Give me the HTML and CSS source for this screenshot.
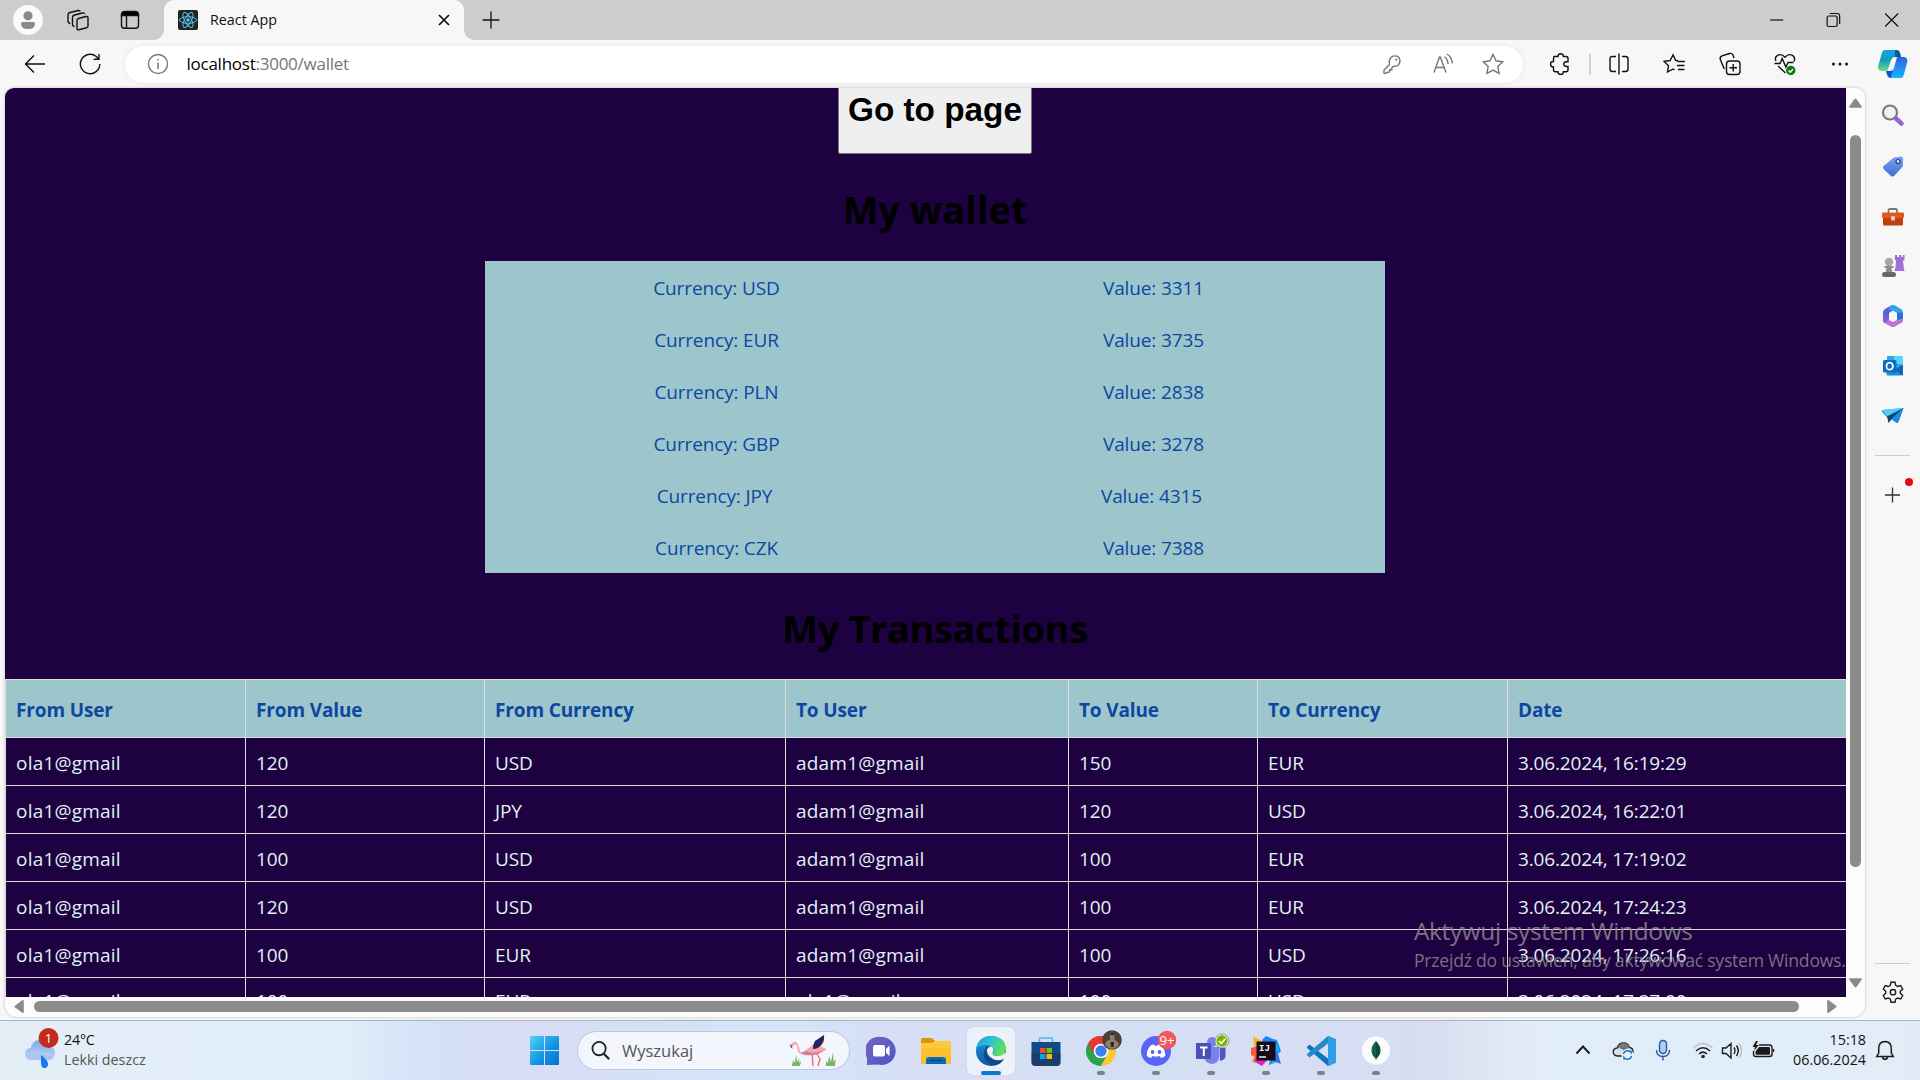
FILE: index.html
```html
<!DOCTYPE html>
<html lang="pl">
<head>
<meta charset="utf-8">
<title>React App</title>
<link rel="stylesheet" href="styles.css">
</head>
<body>
<header class="titlebar">
  <svg class="avatar" viewBox="0 0 30 30"><circle cx="15" cy="15" r="15" fill="#fafafa"/><circle cx="15" cy="10.8" r="4.6" fill="#8a8a8a"/><path d="M8 18.5q0-1.5 1.5-1.5h11q1.500 0 1.500 1.500q0 5.500-7 5.500t-7-5.500z" fill="#8a8a8a"/></svg>
  <svg class="ico workspaces" viewBox="0 0 24 24"><path d="M11 12.500q0-1.500 1.500-2l7.500-2q2-.5 2 1.500v8q0 1.300-1.500 1.800l-7.500 2q-2 .5-2-1.500zM8.500 18.500q-2-.3-2-2.500V9.500q0-2 2-2.500l8-2q1.700-.4 2.300 1M4.300 15.500q-2.300-.5-2.300-2.500V7q0-2 2-2.500l8-2q1.800-.3 2.300 1"/></svg>
  <svg class="ico tabmenu" viewBox="0 0 24 24"><rect x="3.500" y="3.800" width="17" height="16.500" rx="3"/><path d="M8.500 8v12"/><path d="M3.500 7.500q0-4 4-4h9q4 0 4 4z" fill="#000"/></svg>
  <div class="tab">
    <svg class="favicon" viewBox="0 0 20 20"><rect width="20" height="20" rx="2" fill="#20232a"/><g fill="none" stroke="#5ccfee" stroke-width=".9"><ellipse cx="10" cy="10" rx="8.500" ry="3.300"/><ellipse cx="10" cy="10" rx="8.500" ry="3.300" transform="rotate(60 10 10)"/><ellipse cx="10" cy="10" rx="8.500" ry="3.300" transform="rotate(120 10 10)"/></g><circle cx="10" cy="10" r="1.700" fill="#5ccfee"/></svg>
    <span class="tab-title">React App</span>
    <svg class="ico tab-close" viewBox="0 0 24 24"><path d="M7 7l10 10M17 7L7 17" stroke-width="1.700"/></svg>
  </div>
  <svg class="ico newtab" viewBox="0 0 24 24"><path d="M12 3.500v17M3.500 12h17" stroke-width="1.300"/></svg>
  <div class="winctl">
    <svg viewBox="0 0 24 24"><path d="M5.500 12h13"/></svg>
    <svg viewBox="0 0 24 24"><rect x="5.500" y="8" width="10" height="10.500" rx="1.500"/><path d="M8 5.500h7.500q2.500 0 2.500 2.500v8"/></svg>
    <svg viewBox="0 0 24 24"><path d="M5.500 5.500l13 13M18.500 5.500l-13 13"/></svg>
  </div>
</header>

<nav class="toolbar">
  <svg class="ico back" viewBox="0 0 24 24"><path d="M22 12H3M11 3.500L2.500 12l8.500 8.500"/></svg>
  <svg class="ico reload" viewBox="0 0 24 24"><path d="M21.800 12a9.700 9.700 0 1 1-3.500-7.500l2.500 2.500M21 2v5.300h-5.300"/></svg>
  <div class="urlbar">
    <svg class="ico gray" viewBox="0 0 24 24"><circle cx="12" cy="12" r="9.500"/><path d="M12 10.500v6.500M12 7v1.600" stroke-width="1.500"/></svg>
    <span class="url"><b>localhost</b>:3000/wallet</span>
    <svg class="ico gray key" viewBox="0 0 24 24"><path d="M9.500 12.500q-1.200-6 3.500-8.300 4-1.200 6.300 1.800 1.700 4-1 7-2.300 1.800-5 1.200l-1.500 1.500v2h-2l-.3 2.300-2.300.2-1 1.200H4v-3.300z"/><circle cx="16.200" cy="7.700" r="1.100" fill="#767676" stroke="none"/></svg>
    <svg class="ico gray aloud" viewBox="0 0 24 24"><path d="M3 20.500L8.500 5h.8L15 20.500M5 15.500h8M13.500 4.800q3.300 2.500 3.500 7.200M16 2q5 3.500 5.300 9.500"/></svg>
    <svg class="ico gray" viewBox="0 0 24 24"><path d="M12 2.500l3 6.300 6.700 1-4.900 4.700 1.300 6.900-6.100-3.300-6.100 3.300 1.300-6.900L2.300 9.800l6.700-1z"/></svg>
  </div>
  <svg class="ico puzzle" viewBox="0 0 24 24"><path d="M6 4.500h4q0-2.800 2.700-2.800T15.400 4.500H18q2 0 2 2v3.200h-1.800q-2.400.3-2.400 2.400t2.400 2.400H20v3.200q0 2-2 2h-2.600q0 2.700-2.700 2.700T10 19.700H7.500q-2 0-2-2V15Q2.600 15 2.600 12.200T5.500 9.500V6.500z"/></svg>
  <i class="sep"></i>
  <svg class="ico split" viewBox="0 0 24 24"><path d="M12 1.500v21M9 4.500H5.500q-2.500 0-2.500 2.500v10q0 2.500 2.500 2.500H9M15 4.500h3.500q2.500 0 2.500 2.500v10q0 2.500-2.500 2.500H15"/></svg>
  <svg class="ico favs" viewBox="0 0 24 24"><path d="M15 8.700l-2.400-.4L10 2.800 7.200 8.500l-6 .9 4.300 4.300-1 6.300 5.500-3 1.500.9M14.500 9.500H22M14 13.500h7.500M15 17.500h6.500"/></svg>
  <svg class="ico coll" viewBox="0 0 24 24"><rect x="8.500" y="9" width="13.500" height="13.500" rx="3"/><path d="M15.200 12v7.500M11.500 15.700H19M6.300 17L2.300 7.500q-.8-2.500 1.700-3.700l7.500-2.300q2.500-.5 3.500 1.500l1 3"/></svg>
  <svg class="ico heart" viewBox="0 0 24 24"><path d="M3 9Q1.200 5.500 4.500 3.300q4-2 7.500 2 3.500-4 7.500-2 3.300 2.200 1.500 6.200M5 14l7.500 7M1.500 11.500h5.500l2.200-5 3.700 8.500 2.200-4.500h5.500"/><circle cx="17.800" cy="18.500" r="4.700" fill="#0f7b0f" stroke="none"/><path d="M15.600 18.600l1.600 1.600 2.800-3" stroke="#fff"/></svg>
  <svg class="ico dots" viewBox="0 0 24 24"><g fill="#111" stroke="none"><circle cx="5.500" cy="12" r="1.500"/><circle cx="12" cy="12" r="1.500"/><circle cx="18.500" cy="12" r="1.500"/></g></svg>
  <svg class="copilot" viewBox="0 0 30 30"><defs><linearGradient id="cp1" x1="0" y1="0" x2="0" y2="1"><stop offset="0" stop-color="#10a5e8"/><stop offset=".5" stop-color="#159dba"/><stop offset="1" stop-color="#67e07c"/></linearGradient><linearGradient id="cp2" x1="0" y1="0" x2="0" y2="1"><stop offset="0" stop-color="#2f62de"/><stop offset="1" stop-color="#16b5fb"/></linearGradient></defs><path d="M7 1h11q3 0 4 3l1 4h-5q-3 0-4 3l-3 9q-1 2-4 2H3q-4-1-2.500-6L3.500 5Q4.500 1 7 1z" fill="url(#cp1)"/><path d="M17 1h1.500q2.500 0 3.500 3l1 4h-6z" fill="#0b5a93"/><path d="M23 29H13q-3 0-4-3l-1-4q3 0 4-2l4-10q1-2 3-2h7q4.500 1 3 6l-3 11q-1 4-3 4z" fill="url(#cp2)"/><path d="M8 22q3 0 4-3l2.500 3-2 7q-2-.5-3-3z" fill="#1b47cf"/><path d="M19 8h-3q-2 .5-3 3l-3 9q-.6 2-2 2h4q3 0 4-3z" fill="#f7f7f7"/></svg>
</nav>

<main class="main">
  <section class="view">
    <div class="page">
      <div class="page-inner">
        <button class="go">Go to page</button>
        <h1>My wallet</h1>
        <div class="wallet">
          <p>Currency: USD</p><p>Value: 3311</p>
          <p>Currency: EUR</p><p>Value: 3735</p>
          <p>Currency: PLN</p><p>Value: 2838</p>
          <p>Currency: GBP</p><p>Value: 3278</p>
          <p class="narrow">Currency: JPY</p><p class="narrow">Value: 4315</p>
          <p>Currency: CZK</p><p>Value: 7388</p>
        </div>
        <h1 class="second">My Transactions</h1>
        <table class="tx">
          <colgroup><col class="c1"><col class="c2"><col class="c3"><col class="c4"><col class="c5"><col class="c6"><col class="c7"></colgroup>
          <thead><tr><th>From User</th><th>From Value</th><th>From Currency</th><th>To User</th><th>To Value</th><th>To Currency</th><th>Date</th></tr></thead>
          <tbody>
            <tr><td class="mail">ola1@gmail</td><td>120</td><td>USD</td><td class="mail">adam1@gmail</td><td>150</td><td>EUR</td><td>3.06.2024, 16:19:29</td></tr>
            <tr><td class="mail">ola1@gmail</td><td>120</td><td>JPY</td><td class="mail">adam1@gmail</td><td>120</td><td>USD</td><td>3.06.2024, 16:22:01</td></tr>
            <tr><td class="mail">ola1@gmail</td><td>100</td><td>USD</td><td class="mail">adam1@gmail</td><td>100</td><td>EUR</td><td>3.06.2024, 17:19:02</td></tr>
            <tr><td class="mail">ola1@gmail</td><td>120</td><td>USD</td><td class="mail">adam1@gmail</td><td>100</td><td>EUR</td><td>3.06.2024, 17:24:23</td></tr>
            <tr><td class="mail">ola1@gmail</td><td>100</td><td>EUR</td><td class="mail">adam1@gmail</td><td>100</td><td>USD</td><td>3.06.2024, 17:26:16</td></tr>
            <tr class="last"><td class="mail">ola1@gmail</td><td>100</td><td>EUR</td><td class="mail">ola1@gmail</td><td>100</td><td>USD</td><td>3.06.2024, 17:27:00</td></tr>
          </tbody>
        </table>
      </div>
    </div>
    <div class="vscroll">
      <svg viewBox="0 0 12 10"><path d="M5 1q1-1.300 2 0l4.700 6.500q.6 1.500-.7 1.500H1Q-.3 9 .3 7.500z"/></svg>
      <i></i>
      <svg viewBox="0 0 12 10"><path d="M5 9q1 1.300 2 0l4.700-6.500Q12.300 1 11 1H1Q-.3 1 .3 2.500z"/></svg>
    </div>
    <div class="hscroll">
      <svg viewBox="0 0 10 12"><path d="M1 5q-1.300 1 0 2l6.500 4.700q1.500.6 1.500-.7V1Q9-.3 7.500.3z"/></svg>
      <i></i>
      <svg viewBox="0 0 10 12"><path d="M9 5q1.300 1 0 2l-6.500 4.700Q1 12.300 1 11V1Q1-.3 2.500.3z"/></svg>
    </div>
    <div class="watermark"><strong>Aktywuj system Windows</strong><span>Przejdź do ustawień, aby aktywować system Windows.</span></div>
  </section>

  <aside class="sidebar">
    <svg class="find" viewBox="0 0 24 24"><circle cx="9" cy="9.500" r="7" fill="#eef2f5" stroke="#7b7b7b" stroke-width="2.200"/><path d="M15 15.500l5.500 5" stroke="#9a62cf" stroke-width="4.500" stroke-linecap="round"/></svg>
    <svg viewBox="0 0 24 24"><defs><linearGradient id="tg" x1="0" y1="0" x2="0" y2="1"><stop offset="0" stop-color="#77a2ee"/><stop offset="1" stop-color="#4670d0"/></linearGradient></defs><path d="M13 2.500l7-1q2 0 2 2v7q0 1-1 2l-8 8.500q-1.500 1-3 0L2.500 14q-1-1.500 0-3z" fill="url(#tg)"/><circle cx="17" cy="6.500" r="2" fill="#dce8fb" stroke="#233a85" stroke-width="1.200"/></svg>
    <svg class="tools" viewBox="0 0 24 24"><path d="M7.500 8V5.500q0-1.500 1.500-1.500h5.500Q16 4 16 5.500V8" fill="none" stroke="#777" stroke-width="1.800"/><rect x="2" y="11" width="20" height="9.500" rx="1.500" fill="#bf3f0f"/><path d="M2 7.500h20q1 0 1 1V12q0 1-1 1H2q-1 0-1-1V8.500q0-1 1-1z" fill="#e2591f"/><rect x="10" y="11" width="4" height="4.500" rx="1.500" fill="#d9d9d9"/></svg>
    <svg viewBox="0 0 24 24"><path d="M14 1h2v2h2V1h2.500v2H22V1h1.500v4.500l-1.500 1.500.8 7 .7 3H13.500l.8-3 .8-7-1.300-1.500z" fill="#a06fd8"/><circle cx="8" cy="8" r="4.200" fill="#a6a6a6"/><path d="M3.500 12h9v2h-2l1 5h-7l1-5h-2z" fill="#8d8d8d"/><path d="M1 21q0-3 2.500-3h9q2.500 0 2.500 3 0 2-2 2H3q-2 0-2-2z" fill="#686868"/></svg>
    <svg viewBox="0 0 24 24"><path d="M10.500 1.300L4 5Q2 6.200 2 8.500v7q0 2.500 1.500 3.500L8 16V9l4-2.500V1z" fill="#5b63d3"/><path d="M10.500 1.300q1.500-.8 3 0L20 5q2 1.200 2 3.500V16l-6-3.500V9l-5-3-2.500 1.500V3z" fill="#35a2ea"/><path d="M22 8.500v7q0 2.300-2 3.500l-4-3V9z" fill="#2c6ed6"/><path d="M20 19l-6.500 3.700q-1.500.8-3 0L3.500 19 8 16l4 2 4-2 6-1.500q.3 3.200-2 4.500z" fill="#b873d6"/><path d="M3.500 19q-1.500-1-1.500-3.500V12l6 2v2z" fill="#8a5bd6"/><circle cx="12" cy="12" r="4" fill="#f7f7f7"/></svg>
    <svg viewBox="0 0 24 24"><rect x="6" y="2" width="15.500" height="18" rx="1" fill="#28a8ea"/><path d="M13 2h8.500v8H13z" fill="#50d9ff"/><path d="M6 13l8 3 8-5v9q0 1.500-1.500 1.500H7q-1.500 0-1.500-1.500z" fill="#1490df"/><path d="M22 10.500v11L13 16z" fill="#1366ac"/><rect x="2" y="6" width="13.500" height="12.500" rx="1.500" fill="#0f6cbd"/><ellipse cx="8.700" cy="12.200" rx="3.200" ry="3.500" fill="none" stroke="#fff" stroke-width="1.800"/></svg>
    <svg class="send" viewBox="0 0 24 24"><path d="M1 6l21.500-2L17 18.500q-.8 1-2 .2l-4.500-3.200L22.500 4 6 13.500 1 8q-.7-1.500 0-2z" fill="#28a8ea"/><path d="M1 6l21.500-2L6.500 12z" fill="#58ccf6"/><path d="M22.500 4L6 12.500l1.500 6.500 3.500-4z" fill="#0a4776"/><path d="M22.500 4L11 15l5 3.700q1 .3 1.500-.7z" fill="#1490df"/></svg>
    <hr>
    <div class="addwrap"><svg viewBox="0 0 24 24" class="line"><path d="M11.500 4.500v15M4 12h15" stroke="#333" stroke-width="1.300"/></svg><i class="reddot"></i></div>
    <hr class="low">
    <svg viewBox="0 0 24 24" class="line gear"><path d="M10 2.200h4l.7 3.200 1.900 1.100 3.100-1 2 3.500-2.400 2.200v2.100l2.400 2.200-2 3.500-3.100-1-1.900 1.100-.7 3.200h-4l-.7-3.200-1.900-1.100-3.100 1-2-3.500 2.400-2.200v-2.100L2.300 9l2-3.500 3.100 1 1.900-1.100z"/><circle cx="12" cy="12.200" r="2.700"/></svg>
  </aside>
</main>

<footer class="taskbar">
  <div class="weather">
    <svg viewBox="0 0 34 38"><defs><linearGradient id="cl" x1="0" y1="0" x2="0" y2="1"><stop offset="0" stop-color="#7ea6ea"/><stop offset="1" stop-color="#c6d9f8"/></linearGradient></defs><path d="M7 31q-6-.5-6-6t6-6q1-8 9-8t10 7q5 1 5 6t-5 7z" fill="url(#cl)"/><path d="M7 31q-5.500-.5-5.500-5.500h28Q30 30 26 31z" fill="#aac6f3"/><path d="M17 26q7 5 7 9t-3.500 4Q17 39 17 34z" fill="#1877f2"/><circle cx="24.500" cy="9" r="10" fill="#c42b1c"/><text x="24.500" y="14" text-anchor="middle" class="badge-text">1</text></svg>
    <div class="wtext"><span>24°C</span><span class="dim">Lekki deszcz</span></div>
  </div>
  <svg class="start" viewBox="0 0 29 29"><defs><linearGradient id="wn" x1="0" y1="0" x2="1" y2="1"><stop offset="0" stop-color="#4fd2fb"/><stop offset=".6" stop-color="#1090e0"/><stop offset="1" stop-color="#0573cc"/></linearGradient></defs><path d="M1 0h13v14H0V1q0-1 1-1zM15 0h13q1 0 1 1v13H15zM0 15h14v14H1q-1 0-1-1zM15 15h14v13q0 1-1 1H15z" fill="url(#wn)"/></svg>
  <div class="search">
    <svg class="mag" viewBox="0 0 20 20"><circle cx="8.500" cy="8" r="7" fill="none" stroke="#222" stroke-width="1.900"/><path d="M13.500 13.500l5 5" stroke="#222" stroke-width="2.300" stroke-linecap="round"/></svg>
    <span>Wyszukaj</span>
    <svg class="flamingo" viewBox="0 0 48 32"><path d="M3 31l1-6 2 3 1-8 1.500 7 2-4-.5 5 2-2-1 5zM37 31l0-5 2 2 1-7 2 6 2-10 .5 10 2-3-.5 7z" fill="#79b563"/><path d="M23.500 19v6l.5 6M28 19l3 5-2 7" fill="none" stroke="#ee6f78" stroke-width="1.400"/><path d="M2.500 9Q5 5 8 8q3 4 3 9 4 1 7-3l6-4 10-9 1 6-3 5q5 1 5 3-5 3-9 4-11 3-16 0Q8 18 8.500 13 8 9 5.500 9.500L3 13z" fill="#f4a9b0"/><path d="M17 16q8 4 18-1-6 6-14 5-6 0-9-2z" fill="#cf7ea3"/><path d="M35 0q1 5-2.500 9.500T24 14q0-5 2-8z" fill="#272263"/><path d="M2 9l1.500 5L1 11z" fill="#3b294e"/></svg>
  </div>
  <div class="apps">
    <div class="app"><svg viewBox="0 0 30 30"><defs><linearGradient id="ch" x1="0" y1="0" x2="1" y2="1"><stop offset="0" stop-color="#7a5bb9"/><stop offset=".5" stop-color="#6160c7"/><stop offset="1" stop-color="#4a50cc"/></linearGradient></defs><path d="M15 1a14 14 0 1 1-3 27.500L1 29V22A14 14 0 0 1 15 1z" fill="url(#ch)"/><rect x="7" y="9" width="12" height="11.500" rx="2" fill="#fff"/><path d="M20 13l3.500-3.500v10.500L20 17z" fill="#fff"/></svg></div>
    <div class="app"><svg viewBox="0 0 30 30"><path d="M1.500 2H11l3 3v6H0V3.500Q0 2 1.500 2z" fill="#d9970b"/><path d="M0 7h11l3-2h15q1 0 1 1v22H1q-1 0-1-1z" fill="#fdca3b"/><path d="M0 12h30v16H1q-1 0-1-1z" fill="#fcc02d"/><path d="M5 28v-4q0-3 3-3h14q3 0 3 3v4z" fill="#0c6bb8"/><path d="M8.500 24.500h13" stroke="#063e75" stroke-width="1.300"/></svg></div>
    <div class="app active"><svg viewBox="0 0 30 30"><defs><linearGradient id="e1" x1="0" y1="0" x2="1" y2=".4"><stop offset="0" stop-color="#1e9bde"/><stop offset=".5" stop-color="#2bc3d2"/><stop offset="1" stop-color="#5fdf5c"/></linearGradient><linearGradient id="e2" x1="0" y1="0" x2="0" y2="1"><stop offset="0" stop-color="#1d9be1"/><stop offset="1" stop-color="#0b55a8"/></linearGradient></defs><circle cx="15" cy="15" r="15" fill="url(#e2)"/><path d="M.2 12.500Q2 .5 15 0q14 .5 15 12 0 8-8 8-6 0-5.500-2.500 2-1.500 1-4.500-2-4.500-8-4Q3 9.500.2 12.500z" fill="url(#e1)"/><path d="M10.500 16q0-5 5.500-5.500 2.300 3 .5 6.500-.5 3 5.500 3 4 0 7-3 3 0 1.500 3-.5 2-2.500 3-7 4-12.500 1T10.500 16z" fill="#edf1fa"/><path d="M10.500 10.500Q6 17 9 22.500t10 7Q25 28 28 23q-6 2.500-11 0T10.800 15q-.2-2.500 1.500-4.500z" fill="#114a8b"/></svg><i></i></div>
    <div class="app"><svg viewBox="0 0 30 30"><path d="M8.500 7V3q0-1 1-1h11q1 0 1 1v4" fill="none" stroke="#3cc0f0" stroke-width="1.700"/><path d="M.5 6h29v20q0 4-4 4h-21q-4 0-4-4z" fill="#104a86"/><path d="M.5 17h29v9q0 4-4 4h-21q-4 0-4-4z" fill="#233659" opacity=".6"/><path d="M9 12h5.500v5H9z" fill="#f25022"/><path d="M15.500 12H21v5h-5.500z" fill="#7fba00"/><path d="M9 18h5.500v5H9z" fill="#00a4ef"/><path d="M15.500 18H21v5h-5.500z" fill="#ffb900"/></svg></div>
    <div class="app run"><svg viewBox="0 0 30 30"><path d="M15 15L2 7.500A15 15 0 0 1 28 7.500z" fill="#e33b2e"/><path d="M2 7.500A15 15 0 0 0 15 30l6.500-11.500L15 15z" fill="#2ba24c"/><path d="M28 7.500A15 15 0 0 1 15 30l6.500-11.500V7.500z" fill="#fcc934"/><path d="M15 0a15 15 0 0 0-13 7.500L8.500 19 15 7.500h13A15 15 0 0 0 15 0z" fill="#e33b2e"/><circle cx="15" cy="15" r="7.300" fill="#fff"/><circle cx="15" cy="15" r="5.700" fill="#3b82ee"/></svg><svg class="over" viewBox="0 0 20 20"><circle cx="10" cy="10" r="9.800" fill="#4c4037"/><path d="M3 15q1-5 5-5V6q0-3 2-3t2.500 3v4q4 1 4.500 5-4 4-7 4t-7-4z" fill="#8f7d6d"/><path d="M8.500 4q1.500-2 3.500 0v1H8.500zM8.500 12h3.500l-.5 5H9z" fill="#2b241f"/></svg><i></i></div>
    <div class="app run"><svg viewBox="0 0 30 30"><circle cx="15" cy="15" r="15" fill="#5865f2"/><path d="M9.500 9.500q2-1 3.500-1l.7 1.200h2.600L17 8.500q1.500 0 3.500 1 4 5 3.800 10.500-2 1.500-4.300 2l-1.200-2q-3.800 1-7.600 0L10 22q-2.300-.5-4.300-2Q5.500 14.500 9.500 9.500z" fill="#fff"/><circle cx="11.500" cy="16" r="1.900" fill="#5865f2"/><circle cx="18.500" cy="16" r="1.900" fill="#5865f2"/></svg><svg class="over" viewBox="0 0 20 20"><circle cx="10" cy="10" r="9.300" fill="#ee5a5c"/><text x="10" y="15" text-anchor="middle" class="badge-text">9+</text></svg><i></i></div>
    <div class="app run"><svg class="wide" viewBox="0 0 30 30"><circle cx="16" cy="6" r="5" fill="#7b83eb"/><path d="M24 12h5.500v8q0 4-5.500 5z" fill="#4f58c1"/><path d="M9 11h14.500v9q-.5 7-7.500 8-5-.5-7-4z" fill="#7b83eb"/><rect x="0" y="7" width="15" height="16" rx="1" fill="#4b50b5"/><path d="M4 11.500h7.500M7.800 11.500v8.500" stroke="#fff" stroke-width="2"/></svg><svg class="over" viewBox="0 0 20 20"><circle cx="10" cy="11" r="7" fill="#fff" stroke="#777" stroke-width=".8"/><circle cx="10" cy="11" r="5.700" fill="#78b500"/><path d="M7 11l2.300 2.300 4-4.600" fill="none" stroke="#fff" stroke-width="1.700"/></svg><i></i></div>
    <div class="app run"><svg viewBox="0 0 30 30"><path d="M2 0l9 5-3 22-8-2 4-6-3-5 2-4z" fill="#fdb528"/><path d="M0 12l8-2v14l-6 3 2-6-4-2z" fill="#fc5a3e"/><path d="M11 4l4-4 7 3 4 1 4 11-4 4-12-7z" fill="#2086f4"/><path d="M22 3l6 10-2 13-8 3z" fill="#16b3f0"/><path d="M4 21h15l-8 9-7-4z" fill="#e61ec0"/><path d="M26 14l4 14-8-3-5 5z" fill="#2d75e8"/><rect x="5.500" y="5.500" width="19" height="19" fill="#170a18"/><text x="8" y="14.500" class="ij">IJ</text><path d="M8 21h7" stroke="#fff" stroke-width="1.400"/></svg><i></i></div>
    <div class="app run"><svg viewBox="0 0 30 30"><path d="M22 0l8 3.500v23L22 30 .5 11.500 3.500 8.500 22 22.500z" fill="#0f76be"/><path d="M22 0L.5 18.500l3 3L22 7.500z" fill="#2589ca"/><path d="M22 0l8 3.500v23L22 30z" fill="#2f9de4"/></svg><i></i></div>
    <div class="app run"><svg viewBox="0 0 30 30"><circle cx="15" cy="14.500" r="14" fill="#fbfbfb"/><path d="M15 5q-4.500 4.500-4.500 9.500 0 4.500 4 8l.5 2z" fill="#116149"/><path d="M15 5q4.500 4.500 4.500 9.500 0 4.500-4 8l-.5 2z" fill="#0b4b38"/></svg><i></i></div>
  </div>
  <div class="tray">
    <svg viewBox="0 0 24 24" class="line chev"><path d="M5.500 14.500l6.500-7 6.500 7" stroke-width="1.900"/></svg>
    <svg viewBox="0 0 24 24" class="cloud"><path d="M6.500 17q-4.200-.5-4.300-4 0-3.500 4-4 1.500-5 6.300-5 4.500 0 6 4.500 3.500.5 3.500 4T18 17z" fill="#ddd" stroke="#222" stroke-width="1.300"/><path d="M6.500 9q4-.5 6 2.500l6-3Q17 4 12.500 4 8 4 6.500 9z" fill="#777"/><circle cx="16.500" cy="16" r="6" fill="#eaf4fc"/><path d="M12.300 15a4.400 4.400 0 0 1 7.800-1.500v-2M20.700 17a4.400 4.400 0 0 1-7.800 1.500v2" fill="none" stroke="#1473c9" stroke-width="1.400"/></svg>
    <svg viewBox="0 0 24 24" class="mic"><g fill="none" stroke="#2458a6" stroke-width="1.400"><rect x="8.500" y="1.500" width="7" height="13" rx="3.500" fill="#b5cdeb"/><path d="M5.500 11q0 6.500 6.500 6.500t6.500-6.500M12 17.500v4"/></g></svg>
    <svg viewBox="0 0 24 24" class="wifi"><g fill="none" stroke="#222" stroke-width="1.500"><path d="M2.500 9q9.500-9 19 0" stroke="#b9c0c8"/><path d="M5 12q7-6.500 14 0M8 15q4-3.800 8 0"/></g><circle cx="12" cy="17.500" r="1.800" fill="#222"/></svg>
    <svg viewBox="0 0 24 24" class="line vol"><path d="M2.500 9H6l5-4.500V19L6 14.500H2.500zM14 8.500q2 3 0 6.500M16.500 6.500q3.500 5 0 10.500" /><path d="M19 4.500q5 7 0 14.500" stroke="#b9c0c8"/></svg>
    <svg viewBox="0 0 24 24" class="batt"><path d="M8 6h10.500q2.500 0 2.500 2.500V15q0 2.500-2.500 2.500H5Q2.500 17.500 2.500 15v-3" fill="none" stroke="#1a1a1a" stroke-width="1.400"/><path d="M8 8h10q1 0 1 1v6q0 .8-1 .8H5.500q-1 0-1-.8v-2.500zM21.800 9.500q1.700.5 1.700 2t-1.700 2zM5 2L1.500 8H4l-1 4 4.800-6H5L7 2z" fill="#1a1a1a"/></svg>
    <div class="clock"><span>15:18</span><span>06.06.2024</span></div>
    <svg viewBox="0 0 24 24" class="line bell"><path d="M12 2.500q6.300.3 6.300 7V14l2 3.500H3.700l2-3.500V9.500q0-6.700 6.300-7zM9.500 18q.5 2.300 2.500 2.300t2.500-2.300" stroke-width="1.500"/></svg>
  </div>
</footer>
</body>
</html>
```
FILE: styles.css
```css
* { box-sizing: border-box; }
body {
  margin: 0;
  width: 1920px;
  height: 1080px;
  overflow: hidden;
  display: flex;
  flex-direction: column;
  background: #f7f7f7;
  font-family: "Open Sans", "Noto Sans", sans-serif;
}
svg { display: block; flex: none; }
.ico { width: 24px; height: 24px; fill: none; stroke: #111; stroke-width: 1.4; }
.gray { stroke: #767676; }
.line { fill: none; stroke: #1a1a1a; stroke-width: 1.4; }

/* Title bar */
.titlebar { height: 40px; flex: none; display: flex; align-items: center; padding-left: 13px; background: #cdcdcd; }
.avatar { width: 30px; height: 30px; }
.workspaces { margin-left: 22.500px; }
.tabmenu { margin-left: 28.500px; }
.tab {
  position: relative;
  margin-left: 22px;
  width: 300px;
  height: 40px;
  display: flex;
  align-items: center;
  padding: 0 8px 0 14px;
  background: #f7f7f7;
  border-radius: 10px 10px 0 0;
}
.tab::before, .tab::after { content: ""; position: absolute; bottom: 0; width: 10px; height: 10px; }
.tab::before { left: -10px; background: radial-gradient(circle at 0 0, #cdcdcd 9.5px, #f7f7f7 10px); }
.tab::after { right: -10px; background: radial-gradient(circle at 100% 0, #cdcdcd 9.5px, #f7f7f7 10px); }
.favicon { width: 20px; height: 20px; }
.tab-title { margin-left: 12px; flex: 1; font-size: 14.3px; line-height: 20px; color: #111; }
.newtab { margin-left: 15px; }
.winctl { margin-left: auto; display: flex; }
.winctl svg { width: 57.3px; height: 24px; fill: none; stroke: #111; stroke-width: 1.2; }

/* Address bar */
.toolbar { height: 48px; flex: none; display: flex; align-items: center; padding-left: 23px; }
.reload { margin-left: 31px; }
.urlbar {
  margin-left: 23px;
  width: 1398px;
  height: 37px;
  display: flex;
  align-items: center;
  padding: 0 18px 0 20.500px;
  border-radius: 19px;
  background: #fff;
  box-shadow: 0 0 4px rgba(0, 0, 0, .08);
}
.url { flex: 1; margin-left: 17px; font-size: 17px; line-height: 24px; letter-spacing: -.25px; color: #767676; }
.url b { font-weight: 400; color: #000; }
.aloud { margin: 0 26px 0 27px; }
.puzzle { margin-left: 25px; }
.sep { width: 2px; height: 21px; margin: 0 16px 0 17px; background: #d0d0d0; }
.favs { margin-left: 32px; }
.coll, .heart, .dots { margin-left: 31px; }
.copilot { width: 30px; height: 30px; margin-left: 26px; }

/* Browser viewport */
.main { height: 932px; flex: none; display: flex; padding-left: 5px; }
.view {
  position: relative;
  width: 1860px;
  height: 929px;
  display: grid;
  grid-template-columns: 1841px 19px;
  grid-template-rows: 909px 20px;
  background: #fcfcfc;
  border-radius: 9px 9px 12px 12px;
  overflow: hidden;
  box-shadow: 0 0 3px rgba(0, 0, 0, .25);
}
.page { overflow: hidden; background: #1d0140; }
.page-inner { width: 1860px; display: flex; flex-direction: column; align-items: center; }
.go {
  margin: -22px 0 0;
  width: 194px;
  height: 88px;
  padding: 0;
  border: 1px solid #767676;
  border-radius: 2px;
  background: #efefef;
  color: #000;
  font: bold 33.3px "Liberation Sans", Arial, sans-serif;
  white-space: nowrap;
}
h1 { margin: 28px 0 25px; font-size: 38px; line-height: 54px; font-weight: 700; color: #000; }
h1.second { margin: 28px 0 24px; letter-spacing: -.4px; }
.wallet {
  width: 900px;
  height: 312px;
  padding: 0 13px;
  display: grid;
  grid-template-columns: 1fr 1fr;
  grid-auto-rows: 52px;
  background: #9cc6cc;
  color: #0d47a1;
}
.wallet p { margin: 0; text-align: center; font-size: 19px; line-height: 54px; letter-spacing: -.12px; }
.wallet .narrow { padding-right: 4px; }
.tx { width: 1860px; table-layout: fixed; border-collapse: collapse; font-size: 19px; letter-spacing: -.14px; color: #e0f2f1; }
.tx th, .tx td { border: 1px solid #ddd; padding: 0 10px; text-align: left; height: 48px; line-height: 28px; }
.tx td { padding-top: 2px; }
.tx .last td { padding-top: 0; padding-bottom: 2px; }
.tx .mail { letter-spacing: .2px; }
.tx th { height: 58px; padding-top: 2px; background: #9cc6cc; color: #0d47a1; }
.c1 { width: 240px; }
.c2 { width: 239px; }
.c3 { width: 301px; }
.c4 { width: 283px; }
.c5 { width: 189px; }
.c6 { width: 250px; }

.vscroll { display: flex; flex-direction: column; align-items: center; padding: 10px 1px 9px 0; }
.vscroll svg { width: 13px; height: 11px; fill: #8a8a8a; }
.vscroll i { width: 11px; height: 732px; margin: 26px 0 auto; border-radius: 6px; background: #8b8b8b; }
.hscroll { display: flex; align-items: center; padding: 0 9px 1px; }
.hscroll svg { width: 11px; height: 13px; fill: #8a8a8a; }
.hscroll i { width: 1765px; height: 11px; margin: 0 auto 0 9px; border-radius: 6px; background: #8b8b8b; }

.watermark { position: absolute; left: 1409px; top: 825px; display: flex; flex-direction: column; color: rgba(145, 141, 146, .82); white-space: nowrap; }
.watermark strong { font-weight: 400; font-size: 24.5px; line-height: 36px; letter-spacing: -.4px; }
.watermark span { font-size: 17.6px; line-height: 23px; letter-spacing: -.24px; }

/* Edge sidebar */
.sidebar { flex: 1; display: flex; flex-direction: column; align-items: center; padding-top: 15px; }
.sidebar > svg { width: 24px; height: 24px; margin-bottom: 26.2px; }
.sidebar > .find { margin-bottom: 27.7px; }
.sidebar > .tools { margin-bottom: 24.9px; }
.sidebar > .send { margin-bottom: 25px; }
.sidebar hr { width: 35px; height: 1px; margin: 2px 0 0; border: 0; background: #ccc; flex: none; }
.sidebar hr.low { margin-top: auto; }
.sidebar > .gear { margin: 16px 0 16px; }
.addwrap { position: relative; margin-top: 27px; width: 24px; height: 24px; }
.reddot { position: absolute; left: 24px; top: -5px; width: 8px; height: 8px; border-radius: 50%; background: #e30b0b; }

/* Windows taskbar */
.taskbar {
  height: 60px;
  flex: none;
  display: flex;
  align-items: center;
  padding-left: 24px;
  border-top: 1px solid #abb3be;
  background: linear-gradient(90deg, #e3eef7 0, #e2eef8 340px, #d4e2fa 420px, #d8ddf5 520px, #d6e0f7 620px, #d3e5fa 770px, #d6dff5 900px, #d5dff3 1150px, #d7def3 1380px, #d8ddef 1430px, #e1ecf8 1520px, #e0eefa 1700px, #e2ecf7 1920px);
}
.badge-text { fill: #fff; font-size: 13px; }
.weather { width: 506px; display: flex; align-items: center; }
.weather svg { width: 34px; height: 38px; overflow: visible; margin-top: -6px; }
.wtext { margin: -2px 0 0 6px; display: flex; flex-direction: column; font-size: 14.3px; line-height: 20px; color: #111; letter-spacing: -.2px; }
.wtext .dim { color: #555; letter-spacing: 0; }
.start { width: 29px; height: 29px; }
.search {
  margin-left: 18px;
  width: 273px;
  height: 39px;
  display: flex;
  align-items: center;
  padding: 0 12px 0 13px;
  border: 1px solid #bac8e2;
  border-radius: 20px;
  background: #f3f6fd;
}
.mag { width: 19px; height: 19px; }
.search span { flex: 1; margin-left: 12px; font-size: 16.500px; line-height: 24px; color: #555; }
.flamingo { width: 48px; height: 32px; }
.apps { margin-left: 7px; display: flex; gap: 7px; }
.app { position: relative; width: 48px; height: 48px; display: flex; justify-content: center; padding-top: 9px; border-radius: 6px; }
.app svg { width: 30px; height: 30px; }
.app.active { background: #edf1fa; box-shadow: 0 0 1px #aab; }
.app svg.wide { width: 32px; }
.app .over { position: absolute; width: 20px; height: 20px; left: 25px; top: 3px; }
.app i { position: absolute; bottom: 0; left: 20px; width: 8px; height: 4px; border-radius: 2px; background: #7c8089; }
.app.active i { left: 14px; width: 20px; background: #0a78d4; }
.ij { fill: #fff; font: bold 9px "Liberation Mono", monospace; }
.tray { margin-left: auto; display: flex; align-items: center; padding-right: 23px; }
.tray svg { width: 24px; height: 24px; }
.cloud { margin-left: 16px; }
.mic { margin-left: 16px; }
.wifi { margin-left: 16px; }
.vol { margin-left: 5px; }
.batt { margin-left: 7px; }
.clock { width: 91px; margin-top: -2px; display: flex; flex-direction: column; align-items: flex-end; font-size: 14.3px; line-height: 20px; color: #111; }
.bell { margin-left: 7px; }
```
